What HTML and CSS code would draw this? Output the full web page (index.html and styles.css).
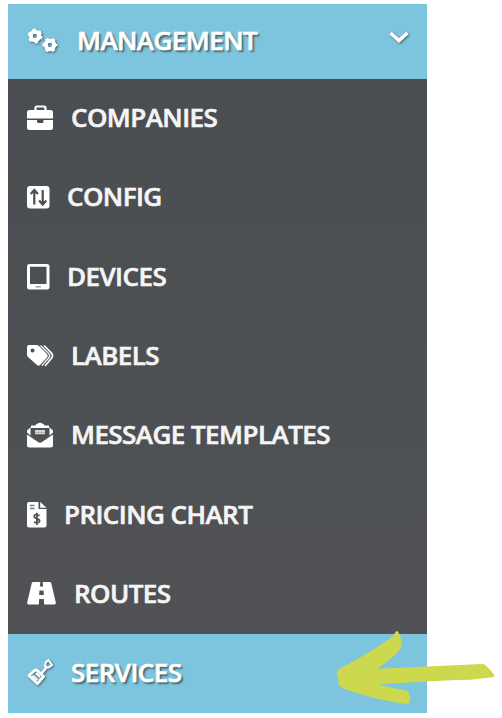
FILE: index.html
```
<!DOCTYPE html>
<html lang="en">
  <head>
    <meta charset="UTF-8" />
    <meta name="viewport" content="width=device-width, initial-scale=1.0" />
    <title>Management</title>
    <link rel="stylesheet" href="styles.css">
  </head>

  <body>
    <nav class="sidebar">
      <div class="item header active">
        <svg class="icon" width="33" height="30" viewBox="0 0 33 30">
          <g fill="none" stroke="#fff">
            <circle cx="8" cy="10" r="4.200" stroke-width="4" />
            <circle cx="8" cy="10" r="6" stroke-width="3" stroke-dasharray="3.142 3.142" />
            <circle cx="23" cy="19" r="4.200" stroke-width="4" />
            <circle cx="23" cy="19" r="6" stroke-width="3" stroke-dasharray="3.142 3.142" stroke-dashoffset="2" />
          </g>
        </svg>
        <span class="label">MANAGEMENT</span>
        <svg class="chevron" width="22" height="16" viewBox="0 0 22 16">
          <path d="M2.500 4 L11 11.500 L19.500 4" fill="none" stroke="#fff" stroke-width="3.600" />
        </svg>
      </div>

      <div class="item">
        <svg class="icon" width="27" height="30" viewBox="0 0 27 30">
          <path d="M8.500 8 V5 Q8.500 3.500 10 3.500 H17 Q18.500 3.500 18.500 5 V8" fill="none" stroke="#fff" stroke-width="2.200" />
          <path fill="#fff" d="M2.500 7 H23.500 Q26 7 26 9.500 V15.500 H0 V9.500 Q0 7 2.500 7 Z M0 17 H10 V18.500 Q10 20 11.500 20 H15 Q16.500 20 16.500 18.500 V17 H26 V24.500 Q26 27 23.500 27 H2.500 Q0 27 0 24.500 Z" />
        </svg>
        <span class="label">COMPANIES</span>
      </div>

      <div class="item">
        <svg class="icon" width="23" height="30" viewBox="0 0 23 30">
          <rect y="4" width="22.500" height="22.500" rx="3" fill="#fff" />
          <g fill="none" stroke="#4b4e52" stroke-width="2.200">
            <path d="M7.300 22.500 V9 M3.700 12 L7.300 8 L10.900 12" />
            <path d="M15.700 8 V21.500 M12.100 18.500 L15.700 22.500 L19.300 18.500" />
          </g>
        </svg>
        <span class="label">CONFIG</span>
      </div>

      <div class="item">
        <svg class="icon" width="23" height="30" viewBox="0 0 23 30">
          <path fill="#fff" fill-rule="evenodd" d="M2.500 2 H20 Q22.500 2 22.500 4.500 V25 Q22.500 27.500 20 27.500 H2.500 Q0 27.500 0 25 V4.500 Q0 2 2.500 2 Z M3 4.800 V22 H19.500 V4.800 Z" />
          <path d="M8.500 24.800 H14" stroke="#a0a3a5" stroke-width="1.500" />
        </svg>
        <span class="label">DEVICES</span>
      </div>

      <div class="item">
        <svg class="icon" width="27" height="30" viewBox="0 0 27 30">
          <path fill="#fff" fill-rule="evenodd" d="M0 6 Q0 4 2 4 H9.500 Q11 4 12 5 L20 13 Q21.500 14.500 20 16.500 L13 24 Q11.500 25.500 10 24 L1 16 Q0 15 0 13.500 Z M5.500 7.500 A2 2 0 1 0 5.600 7.500 Z" />
          <path d="M13.500 4.500 L21.800 12.600 Q23.700 14.800 21.800 16.800 L14.800 24.600" fill="none" stroke="#fff" stroke-width="1.300" />
          <path d="M17 4.500 L24.300 11.800 Q26.600 14.800 24.500 17.300 L18 25" fill="none" stroke="#fff" stroke-width="1.700" />
        </svg>
        <span class="label">LABELS</span>
      </div>

      <div class="item">
        <svg class="icon" width="27" height="30" viewBox="0 0 27 30">
          <path fill="#fff" d="M0 14.500 L11 22 Q13 23.300 15 22 L26 14.500 V25 Q26 27.500 23.500 27.500 H2.500 Q0 27.500 0 25 Z" />
          <path fill="#fff" d="M0 12.500 V10.500 L4 7 V5.500 H8 Q13 0 18 5.500 H22 V7 L26 10.500 V12.500 L22.500 15.500 V8 H3.500 V15.500 Z" />
          <path d="M8 11 H18 M8 13.300 H18" stroke="#d4d5d6" stroke-width="2" />
        </svg>
        <span class="label">MESSAGE TEMPLATES</span>
      </div>

      <div class="item">
        <svg class="icon" width="20" height="30" viewBox="0 0 20 30">
          <path fill="#fff" d="M2 2 H11.500 V9 H19.500 V25.500 Q19.500 27.500 17.500 27.500 H2 Q0 27.500 0 25.500 V4 Q0 2 2 2 Z M13.200 2 L19.500 7.700 H13.200 Z" />
          <path d="M3 5.500 H7.500 M3 8.500 H7.500" stroke="#77797c" stroke-width="1.500" />
          <path d="M12.600 15.600 Q7.500 13.500 7.200 16.300 Q7.300 18 10 18.700 Q13 19.600 12.500 21.500 Q11.500 23.700 7 22.200 M9.900 12.800 V25" fill="none" stroke="#515356" stroke-width="1.800" />
        </svg>
        <span class="label">PRICING CHART</span>
      </div>

      <div class="item">
        <svg class="icon" width="30" height="30" viewBox="0 0 30 30">
          <path fill="#fff" fill-rule="evenodd" d="M6.500 3 H22.500 Q23.800 3 24.200 4 L28.800 23.500 Q29 25.500 27.500 25.500 H1.500 Q0 25.500 .2 23.500 L4.800 4 Q5.200 3 6.500 3 Z M13.300 3 L12.900 7.500 H16.100 L15.700 3 Z M12.500 11.500 L12.100 16 H16.900 L16.500 11.500 Z M12.200 20 L11.800 25.500 H17.200 L16.800 20 Z" />
        </svg>
        <span class="label">ROUTES</span>
      </div>

      <div class="item active">
        <svg class="icon" width="27" height="30" viewBox="0 0 27 30">
          <g fill="none" stroke="#fff" stroke-linejoin="round">
            <path d="M2 17.500 L7.500 12.500 Q9 11.300 10.500 12.700 L16.500 18.500 L10.500 25.500 Z" stroke-width="3" />
            <path d="M5.500 17.500 L10.500 22 M9 15 L13 19" stroke-width="2.200" />
            <path d="M14 16 L19.500 9.500" stroke-width="2.600" />
            <path d="M18.800 4 L21.500 2 L25 7 L21.500 9.500 L18 8.500 Z" stroke-width="2" />
          </g>
        </svg>
        <span class="label">SERVICES</span>
      </div>

      <svg class="arrow" width="166" height="78" viewBox="0 0 166 78">
        <path fill="#ccd94f" d="M60.500 3 Q62.500 .5 64 4.500 Q68 13 66 18 Q65 21 61 25 Q52 33 42.500 39.700 L147 35 Q149.500 34.800 151.500 37 Q156 41.500 159.500 46.500 Q159.500 48 157.500 48.200 L144 49.700 Q134 51.300 122 51 Q90 52.500 43.500 55.300 Q57 59.500 71 61.500 Q75.500 63 75 72 Q74.500 75.500 70.500 75 Q36 70 8.500 59.500 Q3.500 57.500 3.500 53 L3 48.500 Q1 45 2 42 Q3 40.500 5 39.500 Q39 21.500 57 8 Q59 6 60.500 3 Z" />
      </svg>
    </nav>
  </body>
</html>
```

FILE: styles.css
```
body {
  margin: 0;
  padding: 3.5px 0 0 8px;
  background-color: #fff;
  font-family: "Open Sans", sans-serif;
}

.sidebar {
  position: relative;
  width: 419px;
  background: linear-gradient(#494c50, #4e5154 60%, #515254);
}

/* Menu rows */
.item {
  display: flex;
  align-items: center;
  box-sizing: border-box;
  height: 79.3px;
  padding-left: 19px;
  color: #f5f5f5;
  font-size: 26px;
  font-weight: 600;
  line-height: 36px;
  white-space: nowrap;
  -webkit-text-stroke: 0.6px;
}

.header {
  height: 75px;
}

.active {
  background-color: #7dc5de;
  color: #fff;
  text-shadow: 2px 2px 2px rgba(60, 60, 60, 0.75);
}

.active svg {
  filter: drop-shadow(1.5px 1.5px 1px rgba(60, 60, 60, 0.75));
}

.active .arrow,
.sidebar > .arrow {
  filter: none;
}

.icon {
  flex: none;
  margin-right: 17px;
}

.label {
  letter-spacing: -0.55px;
  padding-bottom: 2px;
}

.chevron {
  margin-left: auto;
  margin-right: 17px;
  margin-top: -8px;
}

/* Hand drawn pointer over the selected row */
.arrow {
  position: absolute;
  left: 327px;
  top: 625px;
}
```
